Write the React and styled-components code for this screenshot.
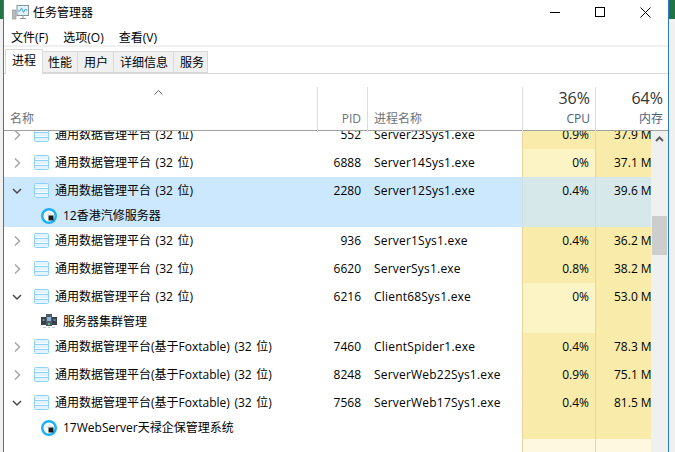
import React from 'react';
import styled, { createGlobalStyle } from 'styled-components';

const GlobalStyle = createGlobalStyle`
  html, body {
    margin: 0;
    padding: 0;
    overflow: hidden;
    background: #f0f0f0;
  }
  body {
    font-family: "Open Sans", "Noto Sans CJK SC", sans-serif;
    font-size: 12px;
    color: #000;
  }
`;

const Desktop = styled.div`
  width: 675px;
  height: 452px;
  display: flex;
  overflow: hidden;
`;

const Strip = styled.div`
  flex: 0 0 ${(props) => props.$width}px;
  background: linear-gradient(#217346 0, #217346 19px, #f0f0f0 19px);
`;

const Window = styled.div`
  flex: 0 0 664px;
  display: flex;
  flex-direction: column;
  background: #fff;
  border-left: 1px solid #2b7cc4;
  border-right: 1px solid #2b7cc4;
`;

const TitleBar = styled.div`
  box-sizing: border-box;
  height: 29px;
  flex: none;
  display: flex;
  align-items: center;
  padding: 0 0 5px 8px;
`;

const Title = styled.div`
  margin-left: 4px;
  padding-top: 1px;
  flex: 1;
  line-height: 24px;
`;

const WinButton = styled.div`
  width: ${(props) => (props.$wide ? 46 : 45)}px;
  height: 22px;
  display: flex;
  align-items: center;
  justify-content: center;
`;

const MenuBar = styled.div`
  height: 16px;
  flex: none;
  display: flex;
  gap: 15px;
  align-items: center;
  padding-left: 7px;
  border-bottom: 2px solid #f0f0f0;
`;

const MenuItem = styled.span`
  line-height: 18px;
  padding-top: 2px;
`;

const TabBar = styled.div`
  height: 24px;
  flex: none;
  padding: 2px 0 0 1px;
  display: flex;
  align-items: flex-end;
  border-bottom: 1px solid #d9d9d9;
`;

const Tab = styled.div`
  box-sizing: border-box;
  height: ${(props) => (props.$active ? 25 : 22)}px;
  padding: ${(props) => (props.$active ? '0 6px' : '0 5px 0 6px')};
  margin: 0 ${(props) => (props.$active ? -1 : 0)}px ${(props) => (props.$active ? -1 : 0)}px 0;
  border: 1px solid #d9d9d9;
  border-left-width: ${(props) => (props.$active ? 1 : 0)}px;
  border-bottom-width: ${(props) => (props.$active ? 0 : 1)}px;
  background: ${(props) => (props.$active ? '#fff' : '#f0f0f0')};
  line-height: ${(props) => (props.$active ? 22 : 21)}px;
  position: relative;
  z-index: ${(props) => (props.$active ? 1 : 0)};
  &:last-child {
    padding-right: 3px;
  }
`;

const ColumnHead = styled.div`
  flex: none;
  height: 43px;
  margin-top: 13px;
  display: grid;
  grid-template-columns: 314px 50px 155px 73px 72px;
  border-bottom: 1px solid #a0a0a0;
`;

const HeadCell = styled.div`
  box-sizing: border-box;
  display: flex;
  flex-direction: column;
  align-items: ${(props) => props.$align || 'flex-end'};
  justify-content: flex-end;
  padding: 0 ${(props) => props.$right || 5}px 4px 6px;
  border-right: ${(props) => (props.$last ? 'none' : '1px solid #dcdcdc')};
  color: #6d7278;
  line-height: 18px;
  position: relative;
`;

const SortCaret = styled.svg`
  position: absolute;
  left: 150px;
  top: 3px;
`;

const Percent = styled.div`
  font-size: 16px;
  line-height: 22px;
  margin-bottom: 1px;
  color: #333;
`;

const Metric = styled.div`
  color: #4c607a;
  line-height: 18px;
`;

const Body = styled.div`
  flex: 1;
  min-height: 0;
  display: flex;
`;

const List = styled.div`
  flex: 0 0 647px;
  display: flex;
  flex-direction: column;
  overflow: hidden;
  & > :first-child {
    margin-top: -10px;
  }
`;

const Group = styled.div`
  flex: none;
  background: ${(props) => (props.$selected ? '#cce8ff' : 'transparent')};
`;

const Row = styled.div`
  display: grid;
  grid-template-columns: 314px 50px 154px 73px 56px;
  height: ${(props) => (props.$child ? 22 : 28)}px;
  line-height: ${(props) => (props.$child ? 20 : 27)}px;
`;

const NameCell = styled.div`
  display: flex;
  align-items: center;
  padding: 0 0 1px ${(props) => (props.$child ? 37 : 8)}px;
  white-space: nowrap;
`;

const NameText = styled.span`
  margin-left: 6px;
  word-spacing: ${(props) => (props.$child ? 0 : 1.5)}px;
`;

const Pid = styled.div`
  text-align: right;
  padding-right: 7px;
`;

const ProcName = styled.div`
  padding-left: 6px;
  white-space: nowrap;
  letter-spacing: 0.2px;
`;

const toneColor = {
  mid: '#f9ecaa',
  low: '#fdf4c5',
  sel: '#d6e8ea',
  faint: '#fff8e1',
};

const Usage = styled.div`
  box-sizing: border-box;
  background: ${(props) => toneColor[props.$tone]};
  border-left: 1px solid ${(props) => (props.$tone === 'sel' ? '#d0dfe0' : '#e9d49c')};
  overflow: hidden;
  white-space: nowrap;
  text-align: ${(props) => (props.$mem ? 'left' : 'right')};
  padding: ${(props) => (props.$mem ? '0 0 0 18px' : '0 6px 0 0')};
`;

const Filler = styled(Row)`
  flex: 1;
  height: auto;
`;

const ScrollBar = styled.div`
  flex: 0 0 17px;
  background: #f0f0f0;
  display: flex;
  flex-direction: column;
  align-items: center;
`;

const ScrollArrow = styled.svg`
  flex: none;
  margin-top: 5px;
`;

const ScrollThumb = styled.div`
  flex: none;
  width: 15px;
  height: 39px;
  margin-top: 74px;
  background: #cdcdcd;
`;

const Chevron = ({ open }) => (
  <svg width="10" height="10" viewBox="0 0 10 10" style={{ flex: 'none' }}>
    {open ? (
      <path d="M1 3 L5 7 L9 3" fill="none" stroke="#4a4a4a" strokeWidth="1.5" />
    ) : (
      <path d="M3 0.5 L7.5 5 L3 9.5" fill="none" stroke="#a6a6a6" strokeWidth="1.5" />
    )}
  </svg>
);

const AppIcon = () => (
  <svg width="15" height="15" viewBox="0 0 15 15" style={{ flex: 'none', marginLeft: 12 }}>
    <rect x="0.5" y="0.5" width="14" height="14" rx="1" fill="#fff" stroke="#8ed2f7" />
    <rect x="1" y="1" width="13" height="3" fill="#e2f3fe" />
    <rect x="1" y="6" width="13" height="3" fill="#e2f3fe" />
    <rect x="1" y="11" width="13" height="3" fill="#e2f3fe" />
    <path d="M1 5.5 H14 M1 10.5 H14" stroke="#8ed2f7" />
  </svg>
);

const DiskIcon = () => (
  <svg width="16" height="16" viewBox="0 0 16 16" style={{ flex: 'none' }}>
    <circle cx="8" cy="8" r="6.75" fill="#fff" stroke="#1fb0fa" strokeWidth="2.5" />
    <path d="M3.5 7.5 L8 3.5 L12.5 7 V8 H3.5 Z" fill="#ececec" />
    <rect x="7.5" y="7.5" width="5" height="5" fill="#1c1c1c" />
  </svg>
);

const ClusterIcon = () => (
  <svg width="16" height="15" viewBox="0 0 16 15" style={{ flex: 'none' }}>
    <rect x="0" y="3" width="16" height="8" fill="#39424c" />
    <rect x="5" y="0" width="6" height="12" fill="#4e5c68" />
    <rect x="6" y="3" width="4" height="4" fill="#8db4dc" />
    <rect x="1.5" y="5" width="2" height="2" fill="#6f8fa0" />
    <rect x="12.5" y="5" width="2" height="2" fill="#6f8fa0" />
    <rect x="7" y="9" width="2" height="2" fill="#5cc46a" />
    <path d="M2 13.5 H5 M7 13.5 H9 M11 13.5 H14" stroke="#c4c8cc" />
  </svg>
);

const TaskIcon = () => (
  <svg width="17" height="15" viewBox="0 0 17 15" style={{ flex: 'none' }}>
    <rect x="0.5" y="5" width="3.5" height="9" fill="#b9bdc0" stroke="#8a8f93" strokeWidth="0.6" />
    <rect x="5" y="0.5" width="11.5" height="10" fill="#dff3fb" stroke="#8a9499" />
    <path d="M6 6 L8 6 L9.5 3 L11.5 7.5 L13 4.5 L15.5 5" fill="none" stroke="#4aa3d8" strokeWidth="1" />
    <path d="M8 13.5 H14 M11 11 V13.5" stroke="#8a9499" />
  </svg>
);

const ICONS = { disk: DiskIcon, cluster: ClusterIcon };

const BASE = '通用数据管理平台 (32 位)';
const FOX = '通用数据管理平台(基于Foxtable) (32 位)';

const processes = [
  { name: BASE, pid: '552', proc: 'Server23Sys1.exe', cpu: '0.9%', mem: '37.9 MB' },
  { name: BASE, pid: '6888', proc: 'Server14Sys1.exe', cpu: '0%', mem: '37.1 MB', cpuTone: 'low' },
  { name: BASE, pid: '2280', proc: 'Server12Sys1.exe', cpu: '0.4%', mem: '39.6 MB', selected: true, child: { icon: 'disk', label: '12香港汽修服务器' } },
  { name: BASE, pid: '936', proc: 'Server1Sys1.exe', cpu: '0.4%', mem: '36.2 MB' },
  { name: BASE, pid: '6620', proc: 'ServerSys1.exe', cpu: '0.8%', mem: '38.2 MB' },
  { name: BASE, pid: '6216', proc: 'Client68Sys1.exe', cpu: '0%', mem: '53.0 MB', cpuTone: 'low', child: { icon: 'cluster', label: '服务器集群管理' } },
  { name: FOX, pid: '7460', proc: 'ClientSpider1.exe', cpu: '0.4%', mem: '78.3 MB' },
  { name: FOX, pid: '8248', proc: 'ServerWeb22Sys1.exe', cpu: '0.9%', mem: '75.1 MB' },
  { name: FOX, pid: '7568', proc: 'ServerWeb17Sys1.exe', cpu: '0.4%', mem: '81.5 MB', child: { icon: 'disk', label: '17WebServer天禄企保管理系统' } },
];

const ProcessGroup = ({ item }) => {
  const cpuTone = item.selected ? 'sel' : item.cpuTone || 'mid';
  const memTone = item.selected ? 'sel' : 'mid';
  const ChildIcon = item.child && ICONS[item.child.icon];
  return (
    <Group $selected={item.selected}>
      <Row>
        <NameCell>
          <Chevron open={Boolean(item.child)} />
          <AppIcon />
          <NameText>{item.name}</NameText>
        </NameCell>
        <Pid>{item.pid}</Pid>
        <ProcName>{item.proc}</ProcName>
        <Usage $tone={cpuTone}>{item.cpu}</Usage>
        <Usage $tone={memTone} $mem>{item.mem}</Usage>
      </Row>
      {item.child && (
        <Row $child>
          <NameCell $child>
            <ChildIcon />
            <NameText $child>{item.child.label}</NameText>
          </NameCell>
          <div />
          <div />
          <Usage $tone={cpuTone} />
          <Usage $tone={memTone} $mem />
        </Row>
      )}
    </Group>
  );
};

const App = () => (
  <>
    <GlobalStyle />
    <Desktop>
      <Strip $width={3} />
      <Window>
        <TitleBar>
          <TaskIcon />
          <Title>任务管理器</Title>
          <WinButton>
            <svg width="10" height="10" viewBox="0 0 10 10">
              <path d="M0 5.5 H10" stroke="#000" />
            </svg>
          </WinButton>
          <WinButton>
            <svg width="10" height="10" viewBox="0 0 10 10">
              <rect x="0.5" y="0.5" width="9" height="9" fill="none" stroke="#000" />
            </svg>
          </WinButton>
          <WinButton $wide>
            <svg width="11" height="11" viewBox="0 0 11 11">
              <path d="M0.5 0.5 L10.5 10.5 M10.5 0.5 L0.5 10.5" stroke="#000" />
            </svg>
          </WinButton>
        </TitleBar>
        <MenuBar>
          <MenuItem>文件(F)</MenuItem>
          <MenuItem>选项(O)</MenuItem>
          <MenuItem>查看(V)</MenuItem>
        </MenuBar>
        <TabBar>
          <Tab $active>进程</Tab>
          <Tab>性能</Tab>
          <Tab>用户</Tab>
          <Tab>详细信息</Tab>
          <Tab>服务</Tab>
        </TabBar>
        <ColumnHead>
          <HeadCell $align="flex-start">
            <SortCaret width="9" height="5" viewBox="0 0 9 5">
              <path d="M0.5 4.5 L4.5 0.5 L8.5 4.5" fill="none" stroke="#666" />
            </SortCaret>
            名称
          </HeadCell>
          <HeadCell $right={6}>PID</HeadCell>
          <HeadCell $align="flex-start">进程名称</HeadCell>
          <HeadCell>
            <Percent>36%</Percent>
            <Metric>CPU</Metric>
          </HeadCell>
          <HeadCell $last>
            <Percent>64%</Percent>
            <Metric>内存</Metric>
          </HeadCell>
        </ColumnHead>
        <Body>
          <List>
            {processes.map((item) => (
              <ProcessGroup key={item.pid} item={item} />
            ))}
            <Filler>
              <div />
              <div />
              <div />
              <Usage $tone="faint" />
              <Usage $tone="faint" $mem />
            </Filler>
          </List>
          <ScrollBar>
            <ScrollArrow width="9" height="6" viewBox="0 0 9 6">
              <path d="M1 5 L4.5 1.5 L8 5" fill="none" stroke="#606060" strokeWidth="2" />
            </ScrollArrow>
            <ScrollThumb />
          </ScrollBar>
        </Body>
      </Window>
      <Strip $width={6} />
    </Desktop>
  </>
);

export default App;
